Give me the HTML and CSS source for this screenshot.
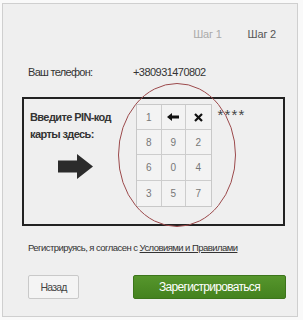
FILE: index.html
```html
<!DOCTYPE html>
<html lang="ru">
<head>
<meta charset="utf-8">
<link rel="stylesheet" href="styles.css">
</head>
<body>
<div class="card">
  <div class="steps">
    <span class="step step-done">Шаг 1</span>
    <span class="step">Шаг 2</span>
  </div>
  <div class="phone-row">
    <span class="phone-label">Ваш телефон:</span>
    <span class="phone-value">+380931470802</span>
  </div>
  <div class="pin-box">
    <div class="pin-left">
      <div class="pin-title">Введите PIN-код карты здесь:</div>
      <svg class="big-arrow" width="35" height="25" viewBox="0 0 35 25"><path d="M0 6.5 H19 V0 L35 12.5 L19 25 V18.5 H0 Z" fill="#2b2b2b"/></svg>
    </div>
    <div class="keypad">
      <div class="key">1</div>
      <div class="key"><svg width="12" height="8" viewBox="0 0 12 8"><path d="M0 4 L5 0 V2.5 H12 V5.5 H5 V8 Z" fill="#111"/></svg></div>
      <div class="key"><svg width="9" height="9" viewBox="0 0 9 9"><path d="M1 1 L8 8 M8 1 L1 8" stroke="#111" stroke-width="2.2"/></svg></div>
      <div class="key">8</div>
      <div class="key">9</div>
      <div class="key">2</div>
      <div class="key">6</div>
      <div class="key">0</div>
      <div class="key">4</div>
      <div class="key">3</div>
      <div class="key">5</div>
      <div class="key">7</div>
    </div>
    <div class="pin-stars">****</div>
  </div>
  <div class="terms">Регистрируясь, я согласен с <a class="terms-link" href="#">Условиями и Правилами</a></div>
  <div class="buttons">
    <button class="btn btn-back">Назад</button>
    <button class="btn btn-register">Зарегистрироваться</button>
  </div>
  <svg class="ring" width="120" height="146" viewBox="0 0 120 146"><ellipse cx="60" cy="73" rx="58.5" ry="71.5" fill="none" stroke="#9c4a4c" stroke-width="1"/></svg>
</div>
</body>
</html>
```
FILE: styles.css
```css
html, body {
  margin: 0;
  padding: 0;
  background: #f9f9f9;
  font-family: "Liberation Sans", Arial, sans-serif;
  color: #333;
}
.card {
  position: relative;
  box-sizing: border-box;
  margin: 3px 0 0 2px;
  width: 296px;
  height: 314px;
  background: #efefef;
  border: 1px solid #cfcfcf;
  padding: 0;
}
.steps {
  display: flex;
  justify-content: flex-end;
  gap: 26px;
  padding: 23px 21px 0 0;
  font-size: 11px;
  line-height: 14px;
  letter-spacing: -0.2px;
}
.step { color: #555; }
.step-done { color: #aaa; }
.phone-row {
  display: flex;
  margin-top: 24px;
  padding-left: 25px;
  font-size: 11px;
  line-height: 14px;
  color: #333;
}
.phone-label { width: 105px; letter-spacing: -0.7px; }
.phone-value { letter-spacing: -0.55px; }
.pin-box {
  display: flex;
  align-items: flex-start;
  box-sizing: border-box;
  margin: 18px 0 0 19px;
  width: 263px;
  height: 129px;
  border: 2px solid #222;
  padding: 5px 0 0 0;
}
.pin-left {
  width: 112px;
  box-sizing: border-box;
  padding: 5px 0 0 6px;
  display: flex;
  flex-direction: column;
}
.pin-title {
  font-weight: bold;
  font-size: 11px;
  line-height: 17px;
  letter-spacing: -0.6px;
  color: #333;
}
.big-arrow {
  margin: 11px 0 0 28px;
}
.keypad {
  display: grid;
  grid-template-columns: repeat(3, 24.5px);
  grid-template-rows: repeat(4, 25.2px);
  border: 1px solid #c8c8c8;
  background: #f3f3f3;
}
.key {
  display: flex;
  align-items: center;
  justify-content: center;
  font-size: 10px;
  color: #777;
  border-right: 1px solid #cdcdcd;
  border-bottom: 1px solid #cdcdcd;
}
.key:nth-child(3n) { border-right: none; }
.key:nth-child(n+10) { border-bottom: none; }
.pin-stars {
  margin-left: 6px;
  margin-top: 3px;
  font-size: 15px;
  line-height: 16px;
  color: #444;
  letter-spacing: 1.2px;
}
.terms {
  margin-top: 15px;
  padding-left: 25px;
  font-size: 9.5px;
  line-height: 14px;
  letter-spacing: -0.55px;
  color: #333;
}
.terms-link {
  color: #333;
  text-decoration: underline;
}
.buttons {
  display: flex;
  margin-top: 20px;
  padding-left: 25px;
  gap: 54px;
}
.btn {
  box-sizing: border-box;
  height: 24px;
  font-family: "Liberation Sans", Arial, sans-serif;
  padding: 0;
  cursor: pointer;
}
.btn-back {
  width: 51px;
  background: #f4f4f4;
  border: 1px solid #c9c9c9;
  border-radius: 2px;
  font-size: 10.5px;
  letter-spacing: -0.8px;
  color: #444;
}
.btn-register {
  width: 153px;
  background: linear-gradient(#56962c, #44821f);
  border: 1px solid #3c751b;
  border-radius: 2px;
  font-size: 12px;
  letter-spacing: -0.7px;
  color: #fff;
}
.ring {
  position: absolute;
  left: 114px;
  top: 78px;
  pointer-events: none;
}
```
